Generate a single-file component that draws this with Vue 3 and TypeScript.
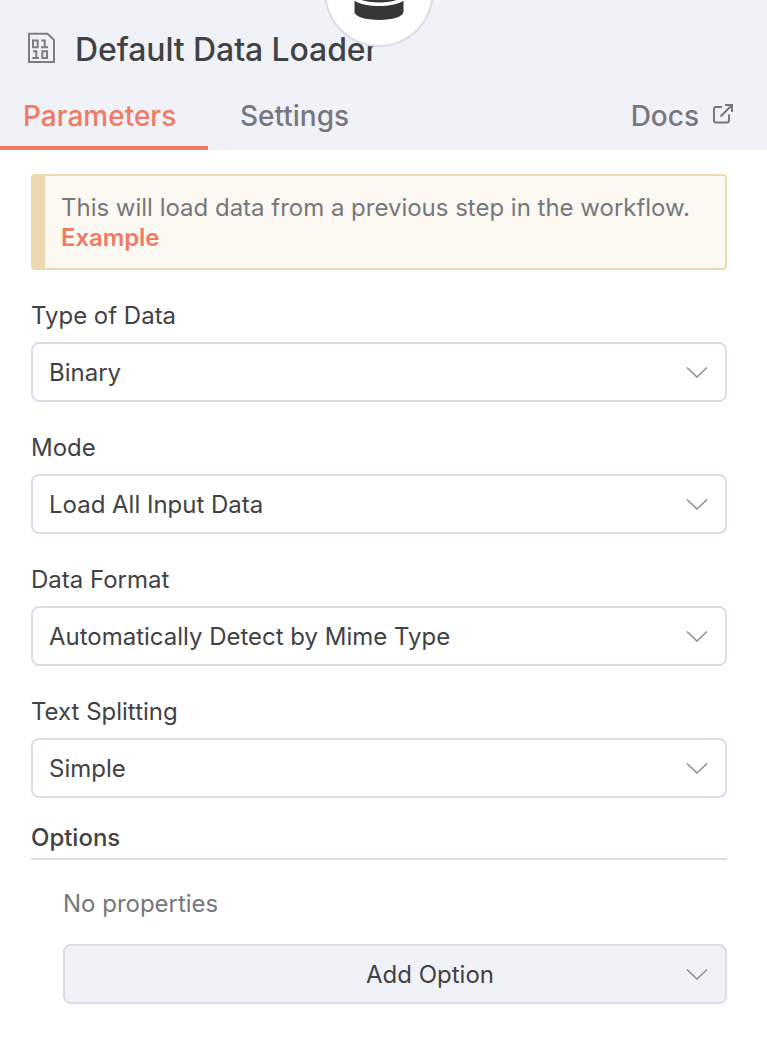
<script setup lang="ts">
interface Field {
  label: string
  value: string
}

const fields: Field[] = [
  { label: 'Type of Data', value: 'Binary' },
  { label: 'Mode', value: 'Load All Input Data' },
  { label: 'Data Format', value: 'Automatically Detect by Mime Type' },
  { label: 'Text Splitting', value: 'Simple' },
]
</script>

<template>
  <div class="panel">
    <header class="header">
      <div class="title-row">
        <svg class="file-icon" width="28" height="32" viewBox="0 0 28 32" fill="none" stroke="#7d7e83" stroke-width="2">
          <path d="M1 1.800H19.500L26 8V30H1Z" />
          <path d="M5 8.500H9.700V15.200H5ZM13.300 8.500H16.700V15.200M13 15.200H20M5 19.200H8.300V26M4.300 26H11M14.300 19.200H19V26H14.300Z" />
        </svg>
        <h1 class="title">Default Data Loader</h1>
      </div>
      <nav class="tabs">
        <a class="tab active">Parameters</a>
        <a class="tab settings">Settings</a>
        <a class="tab docs">
          <span>Docs</span>
          <svg width="22" height="22" viewBox="0 0 22 22" fill="none" stroke="#77787d" stroke-width="2">
            <path d="M10 4H4Q2 4 2 6V17.500Q2 19.500 4 19.500H15Q17 19.500 17 17.500V11.500" />
            <path d="M13 2H20V9M20 2L8.500 13.500" />
          </svg>
        </a>
      </nav>
      <div class="node-badge">
        <svg width="50" height="56" viewBox="0 0 448 512" fill="#373737">
          <path d="M448 73.143v45.714C448 159.143 347.667 192 224 192S0 159.143 0 118.857V73.143C0 32.857 100.333 0 224 0s224 32.857 224 73.143zM448 176v102.857C448 319.143 347.667 352 224 352S0 319.143 0 278.857V176c48.125 33.143 136.208 48.572 224 48.572S399.874 209.143 448 176zm0 160v102.857C448 479.143 347.667 512 224 512S0 479.143 0 438.857V336c48.125 33.143 136.208 48.572 224 48.572S399.874 369.143 448 336z" />
        </svg>
      </div>
    </header>

    <main class="content">
      <div class="notice">
        This will load data from a previous step in the workflow.
        <a class="example">Example</a>
      </div>

      <div v-for="field in fields" :key="field.label" class="field">
        <label class="label">{{ field.label }}</label>
        <div class="select">
          <span class="value">{{ field.value }}</span>
          <svg class="chevron" width="22" height="12" viewBox="0 0 22 12" fill="none">
            <path d="M1 1.500L11 11L21 1.500" />
          </svg>
        </div>
      </div>

      <h2 class="options-title">Options</h2>
      <section class="options">
        <p class="empty">No properties</p>
        <div class="select add">
          <span class="value add-label">Add Option</span>
          <svg class="chevron" width="22" height="12" viewBox="0 0 22 12" fill="none">
            <path d="M1 1.500L11 11L21 1.500" />
          </svg>
        </div>
      </section>
    </main>
  </div>
</template>

<style>
body {
  margin: 0;
  background: #fff;
}
</style>

<style scoped>
.panel {
  box-sizing: border-box;
  width: 767px;
  height: 1038px;
  overflow: hidden;
  background: #fff;
  color: #414244;
  font-family: Inter, "Liberation Sans", sans-serif;
  font-size: 24px;
  line-height: 30px;
  letter-spacing: -0.01px;
}

.header {
  position: relative;
  box-sizing: border-box;
  height: 150px;
  padding-top: 30px;
  background: #f1f2f7;
}

.title-row {
  display: flex;
  align-items: center;
  height: 40px;
  padding-left: 28px;
}

.file-icon {
  flex: none;
  margin-top: -4px;
}

.title {
  margin: 0 0 0 19px;
  font-size: 32px;
  line-height: 40px;
  font-weight: 500;
  letter-spacing: -0.1px;
  white-space: nowrap;
}

.tabs {
  display: flex;
  height: 80px;
}

.tab {
  box-sizing: border-box;
  padding-top: 28px;
  font-size: 28px;
  line-height: 36px;
  font-weight: 500;
  letter-spacing: 0;
  color: #77787d;
}

.active {
  width: 208px;
  padding-left: 23px;
  border-bottom: 4px solid #ee7b64;
  color: #f07a64;
}

.settings {
  padding-left: 32px;
}

.docs {
  display: flex;
  gap: 13px;
  margin-left: auto;
  padding-right: 33px;
}

.docs svg {
  margin-top: 5px;
}

.node-badge {
  position: absolute;
  left: 324px;
  top: -64px;
  display: flex;
  align-items: center;
  justify-content: center;
  box-sizing: border-box;
  width: 110px;
  height: 111px;
  padding-right: 1px;
  border: 2px solid #d9dde8;
  border-radius: 50%;
  background: #fff;
}

.content {
  padding: 24px 40px 0 31px;
}

.notice {
  box-sizing: border-box;
  height: 96px;
  padding: 17px 16px;
  border: 2px solid #eed8b2;
  border-left-width: 14px;
  border-radius: 4px;
  background: #fcf9f2;
  color: #76777c;
}

.example {
  display: block;
  color: #f07a64;
  font-weight: 600;
  letter-spacing: -0.1px;
}

.field {
  height: 132px;
}

.notice + .field {
  margin-top: 30px;
}

.label {
  display: block;
  height: 42px;
  line-height: 32px;
}

.select {
  display: flex;
  align-items: center;
  justify-content: space-between;
  box-sizing: border-box;
  height: 60px;
  padding: 0 17px 0 16px;
  border: 2px solid #d9dde8;
  border-radius: 8px;
  background: #fff;
}

.value {
  padding-top: 2px;
}

.chevron {
  flex: none;
  stroke: #909196;
  stroke-width: 1.6;
}

.options-title {
  box-sizing: border-box;
  height: 38px;
  margin: -6px 0 0;
  border-bottom: 2px solid #d9dde8;
  font-size: 24px;
  line-height: 32px;
  font-weight: 500;
}

.options {
  padding-left: 32px;
}

.empty {
  box-sizing: border-box;
  height: 84px;
  margin: 0;
  padding-top: 28px;
  color: #76777c;
  line-height: 32px;
}

.add {
  background: #f1f2f7;
}

.add-label {
  flex: 1;
  padding-left: 93px;
  text-align: center;
}
</style>
